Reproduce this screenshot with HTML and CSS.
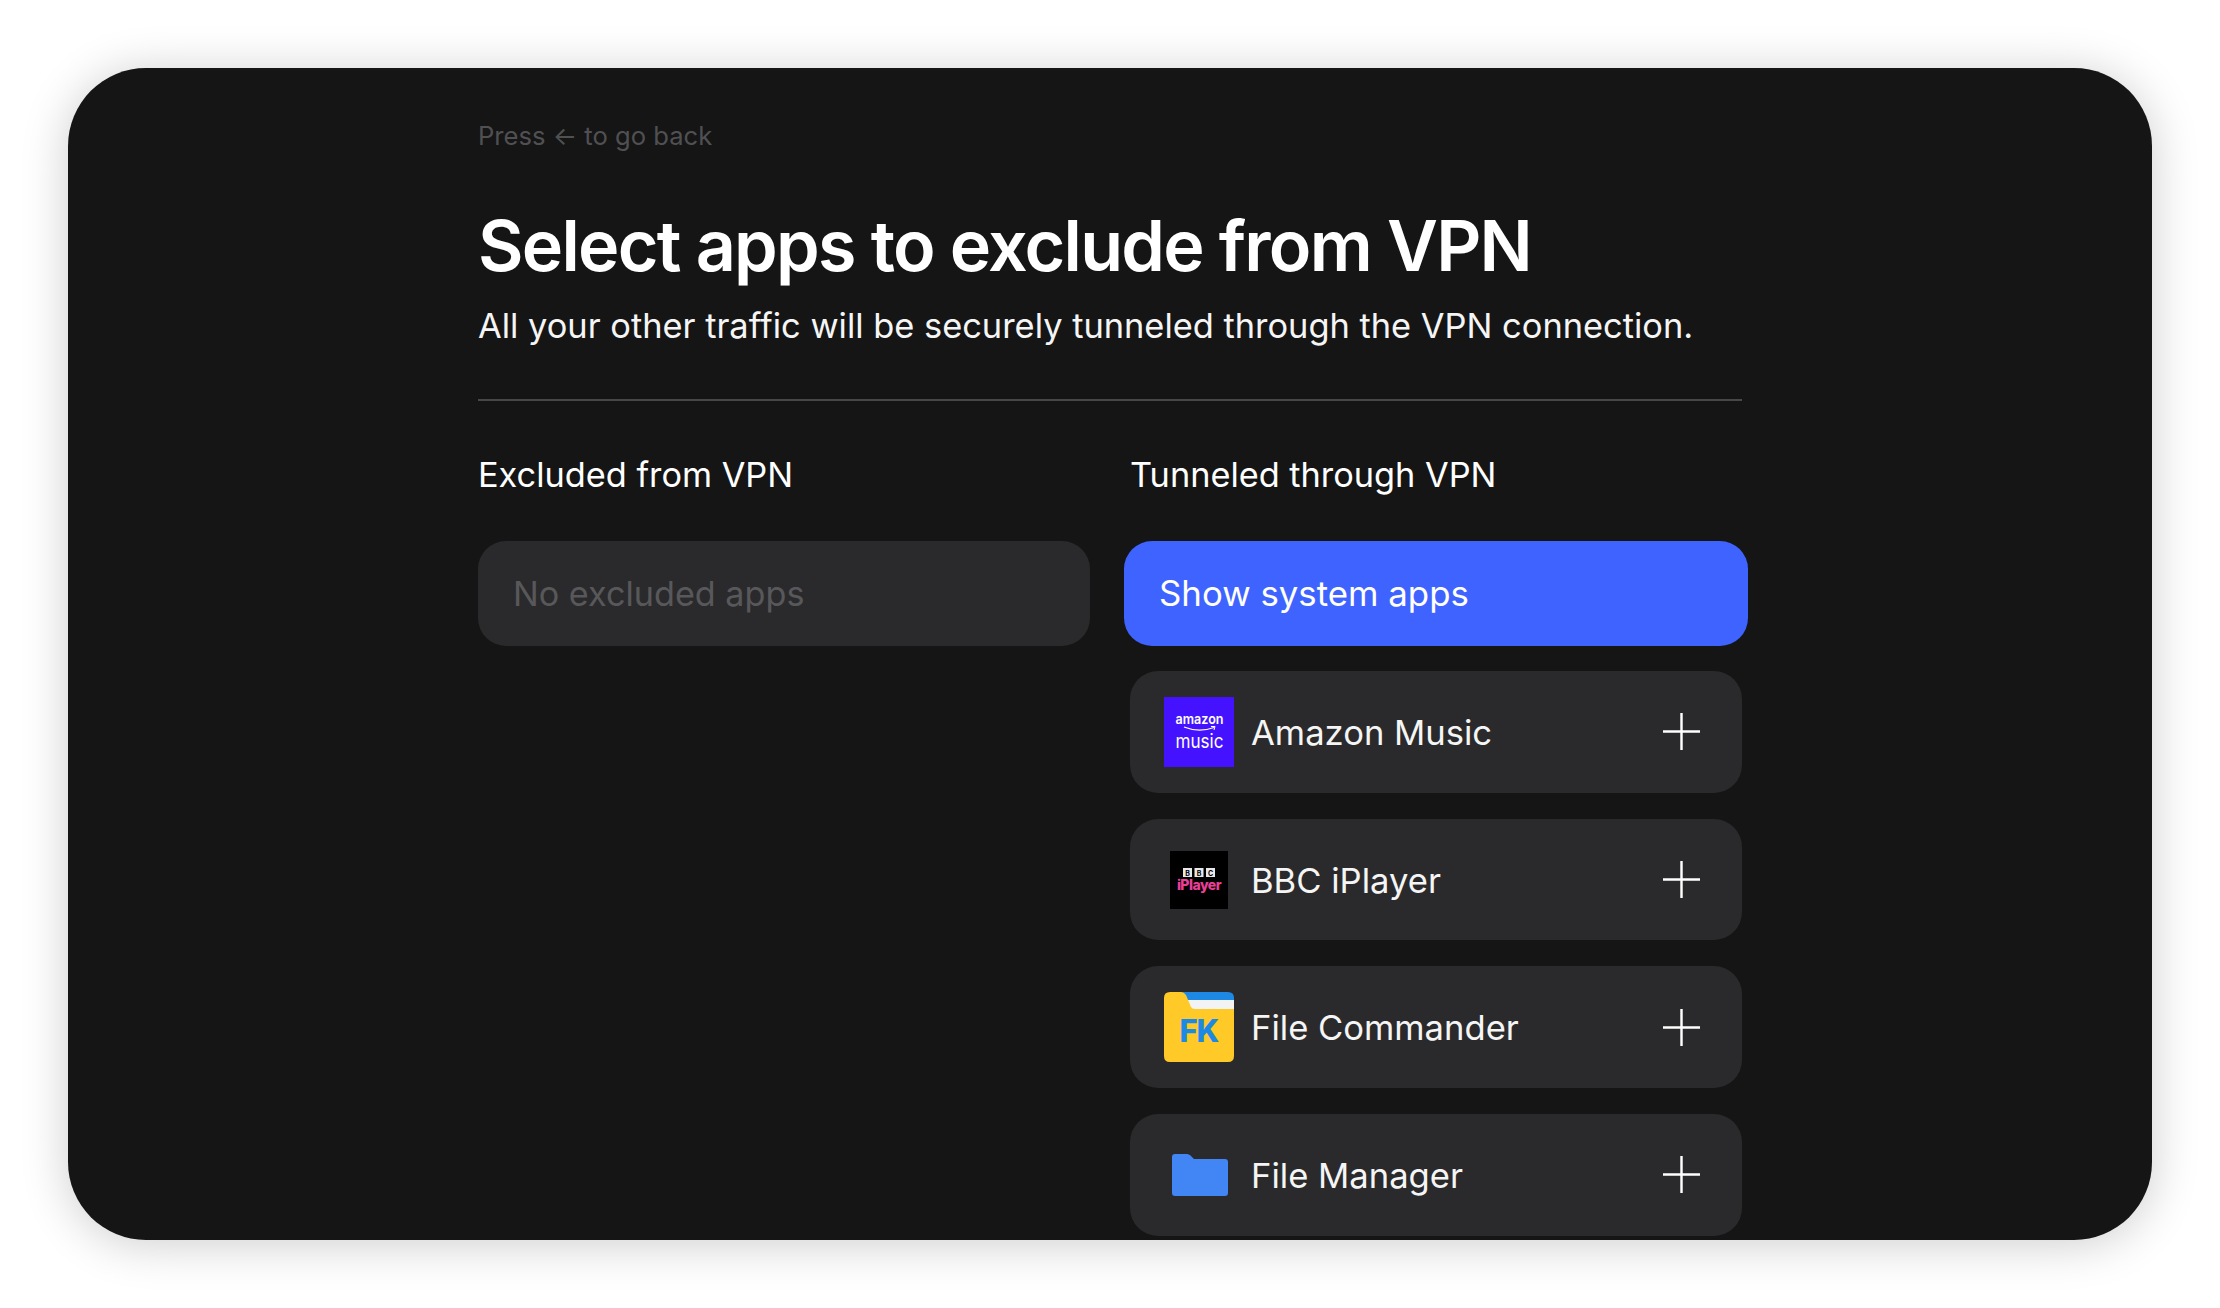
FILE: index.html
```html
<!DOCTYPE html>
<html lang="en">
<head>
    <meta charset="UTF-8">
    <meta name="viewport" content="width=device-width, initial-scale=1.0">
    <title>Select apps to exclude from VPN</title>
    <link rel="stylesheet" href="styles.css">
</head>
<body>
    <div class="screen">
        <main class="content">
            <p class="back">Press ← to go back</p>
            <h1>Select apps to exclude from VPN</h1>
            <p class="subtitle">All your other traffic will be securely tunneled through the VPN connection.</p>
            <hr class="divider">

            <div class="columns">
                <section class="column">
                    <h2>Excluded from VPN</h2>
                    <div class="empty">No excluded apps</div>
                </section>

                <section class="column">
                    <h2>Tunneled through VPN</h2>
                    <button class="show-system">Show system apps</button>

                    <div class="app">
                        <svg class="app-icon" viewBox="0 0 70 70">
                            <rect width="70" height="70" fill="#4412ff"/>
                            <text class="amazon-word" x="11.500" y="27" textLength="48" lengthAdjust="spacingAndGlyphs">amazon</text>
                            <path d="M20 30 Q35 36 50 30.500" fill="none" stroke="#fff" stroke-width="1.300"/>
                            <path d="M47 29.500 L51 29.500 L50 33" fill="none" stroke="#fff" stroke-width="1"/>
                            <text class="amazon-music" x="11.500" y="51" textLength="48" lengthAdjust="spacingAndGlyphs">music</text>
                        </svg>
                        <span class="app-name">Amazon Music</span>
                        <svg class="plus" viewBox="0 0 38 38"><path d="M19 0V38M0 19H38"/></svg>
                    </div>

                    <div class="app">
                        <svg class="app-icon" viewBox="0 0 70 70">
                            <rect x="6" y="6" width="58" height="58" fill="#000"/>
                            <rect x="19" y="23" width="9" height="9" fill="#e8e8e8"/>
                            <rect x="30.500" y="23" width="9" height="9" fill="#e8e8e8"/>
                            <rect x="42" y="23" width="9" height="9" fill="#e8e8e8"/>
                            <text class="bbc-letter" x="23.500" y="30.500" text-anchor="middle">B</text>
                            <text class="bbc-letter" x="35" y="30.500" text-anchor="middle">B</text>
                            <text class="bbc-letter" x="46.500" y="30.500" text-anchor="middle">C</text>
                            <text class="bbc-player" x="35" y="45" text-anchor="middle">iPlayer</text>
                        </svg>
                        <span class="app-name">BBC iPlayer</span>
                        <svg class="plus" viewBox="0 0 38 38"><path d="M19 0V38M0 19H38"/></svg>
                    </div>

                    <div class="app">
                        <svg class="app-icon" viewBox="0 0 70 70">
                            <path d="M14 0H64Q70 0 70 6V20H14Z" fill="#1e88e5"/>
                            <path d="M22 8H70V18H26Z" fill="#f1f3f5"/>
                            <path d="M6 0H17Q20 0 22 3L27 15Q28 17 31 17H70V64Q70 70 64 70H6Q0 70 0 64V6Q0 0 6 0Z" fill="#ffca28"/>
                            <text class="fk" x="35" y="50" text-anchor="middle">FK</text>
                        </svg>
                        <span class="app-name">File Commander</span>
                        <svg class="plus" viewBox="0 0 38 38"><path d="M19 0V38M0 19H38"/></svg>
                    </div>

                    <div class="app">
                        <svg class="app-icon" viewBox="0 0 70 70">
                            <path d="M11 14H23Q25 14 26.500 15.500L30 19H61Q64 19 64 22V53Q64 56 61 56H11Q8 56 8 53V17Q8 14 11 14Z" fill="#4285f4"/>
                        </svg>
                        <span class="app-name">File Manager</span>
                        <svg class="plus" viewBox="0 0 38 38"><path d="M19 0V38M0 19H38"/></svg>
                    </div>
                </section>
            </div>
        </main>
    </div>
</body>
</html>
```

FILE: styles.css
```css
/* General Styles */
html, body {
    margin: 0;
    background: #fff;
}

body {
    padding: 68px;
    font-family: "Inter", "Liberation Sans", sans-serif;
    color: #fff;
}

.screen {
    height: 1172px;
    background: #151515;
    border-radius: 78px;
    box-shadow: 0 4px 48px rgba(0, 0, 0, 0.2);
    overflow: hidden;
}

.content {
    width: 1264px;
    margin-left: 410px;
}

.back {
    margin: 0;
    padding-top: 52px;
    font-size: 25.600px;
    line-height: 32px;
    color: #505053;
}

h1 {
    margin: 52px 0 0;
    font-size: 70px;
    line-height: 84px;
    font-weight: 600;
    letter-spacing: -1.730px;
}

.subtitle {
    margin: 16px 0 0;
    font-size: 34.400px;
    line-height: 44px;
    color: #f5f5f5;
}

.divider {
    margin: 51px 0 0;
    border: 0;
    height: 2px;
    background: #48484a;
}

.columns {
    display: grid;
    grid-template-columns: 612px 612px;
    gap: 40px;
}

h2 {
    margin: 52px 0 44px;
    font-size: 34.300px;
    line-height: 44px;
    font-weight: 400;
}

.empty, .show-system {
    box-sizing: border-box;
    display: block;
    height: 105px;
    border-radius: 28px;
    line-height: 105px;
}

.empty {
    padding-left: 35px;
    background: #2a2a2c;
    color: #58585b;
    font-size: 34.200px;
}

.show-system {
    width: 624px;
    margin: 0 -6px 25px;
    padding: 0 0 0 35px;
    border: 0;
    background: #3e63ff;
    color: #fff;
    font-family: inherit;
    font-size: 34.800px;
    text-align: left;
}

.app {
    display: flex;
    align-items: center;
    gap: 17px;
    box-sizing: border-box;
    height: 121.700px;
    margin-bottom: 26px;
    padding: 0 42px 0 34px;
    background: #2a2a2c;
    border-radius: 28px;
}

.app-icon {
    width: 70px;
    height: 70px;
    flex: none;
}

.app-name {
    flex: 1;
    font-size: 34.600px;
    color: #f5f5f5;
}

.plus {
    width: 37px;
    height: 37px;
    flex: none;
}

.plus path {
    stroke: #fff;
    stroke-width: 2.500;
    fill: none;
}

.amazon-word {
    font-size: 14.500px;
    font-weight: 600;
    fill: #fff;
}

.amazon-music {
    font-size: 20px;
    font-weight: 400;
    fill: #fff;
}

.bbc-letter {
    font-size: 7px;
    font-weight: 700;
    fill: #000;
}

.bbc-player {
    font-size: 14px;
    font-weight: 800;
    fill: #ea3f97;
    letter-spacing: -0.500px;
}

.fk {
    font-size: 31px;
    font-weight: 800;
    fill: #1e88e5;
    letter-spacing: -1px;
}
```
